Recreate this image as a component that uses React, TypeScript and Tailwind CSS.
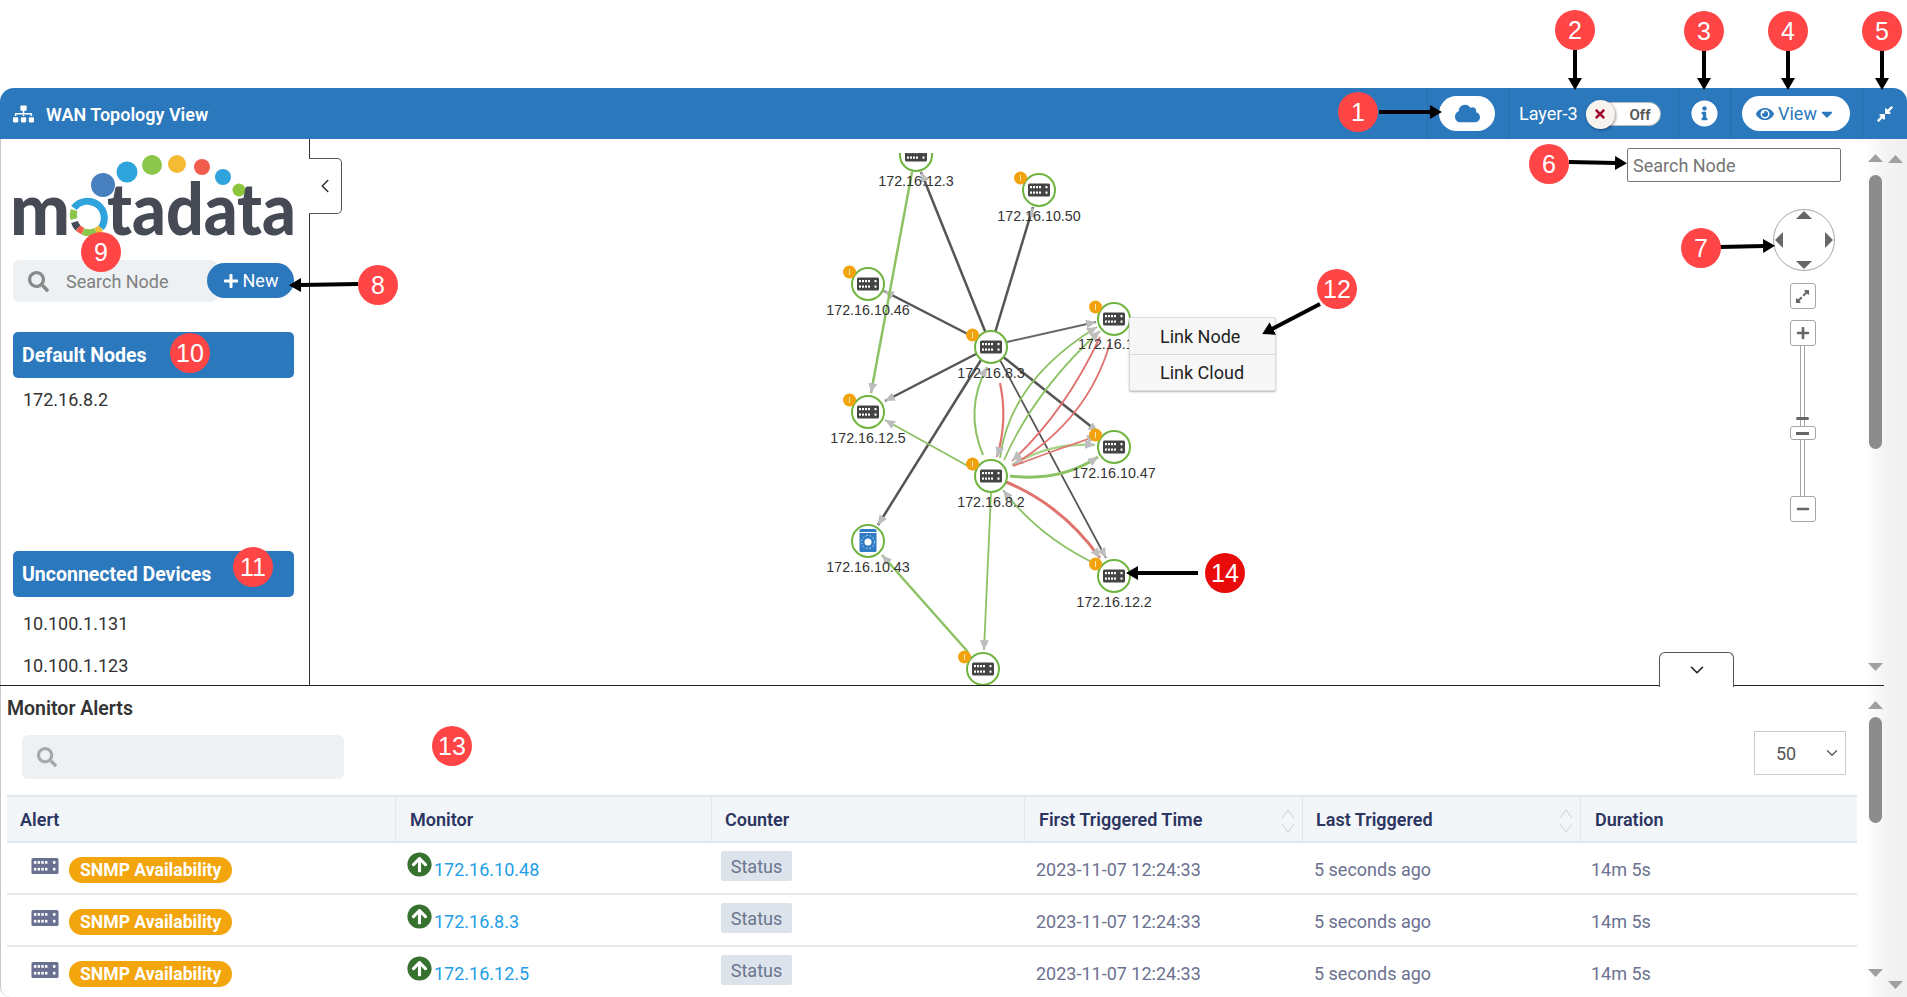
import { ChevronDown, ChevronLeft } from 'lucide-react';
import {
  FaArrowCircleUp,
  FaCaretDown,
  FaCloud,
  FaCompressAlt,
  FaExpandAlt,
  FaEye,
  FaInfoCircle,
  FaMinus,
  FaPlus,
  FaSearch,
  FaSitemap,
  FaTimes,
} from 'react-icons/fa';

const edges = [
  { d: 'M991 346 L921 172', color: '#555', w: 2.5 },
  { d: 'M991 346 L1033 207', color: '#555', w: 2.5 },
  { d: 'M991 346 L884 291', color: '#555', w: 2.5 },
  { d: 'M1007 342 L1096 322', color: '#666', w: 1.8 },
  { d: 'M976 354 L885 401', color: '#555', w: 2.5 },
  { d: 'M981 360 L878 525', color: '#555', w: 2.5 },
  { d: 'M1002 356 L1098 432', color: '#555', w: 2.5 },
  { d: 'M1000 360 L1106 558', color: '#555', w: 1.8 },
  { d: 'M912 172 L871 393', color: '#8cc263', w: 2.5 },
  { d: 'M975 470 L885 420', color: '#8cc263', w: 1.8 },
  { d: 'M991 493 L984 650', color: '#8cc263', w: 1.8 },
  { d: 'M968 652 L882 555', color: '#8cc263', w: 2.5 },
  { d: 'M1098 565 Q1040 538 1003 490', color: '#8cc263', w: 1.8 },
  { d: 'M1000 458 Q1010 380 1097 327', color: '#8cc263', w: 1.8 },
  { d: 'M1004 460 Q1035 390 1100 331', color: '#8cc263', w: 1.8 },
  { d: 'M983 455 Q964 410 987 367', color: '#8cc263', w: 2 },
  { d: 'M1010 476 Q1060 482 1098 457', color: '#8cc263', w: 3 },
  { d: 'M1012 465 Q1050 442 1095 445', color: '#a9d48a', w: 2.5 },
  { d: 'M1000 383 Q1008 420 997 457', color: '#e0736e', w: 2.2 },
  { d: 'M1100 337 Q1065 412 1012 461', color: '#e0736e', w: 1.8 },
  { d: 'M1110 343 Q1088 420 1013 465', color: '#e0736e', w: 1.8 },
  { d: 'M1013 466 Q1055 450 1097 436', color: '#e0736e', w: 1.8 },
  { d: 'M1006 482 Q1062 505 1100 558', color: '#e0736e', w: 3 },
];

const nodes = [
  { x: 916, y: 155, ly: 186, label: '172.16.12.3', badge: false },
  { x: 1039, y: 190, ly: 221, label: '172.16.10.50', badge: true },
  { x: 868, y: 284, ly: 315, label: '172.16.10.46', badge: true },
  { x: 991, y: 347, ly: 378, label: '172.16.8.3', badge: true },
  { x: 1114, y: 319, ly: 350, label: '', badge: true },
  { x: 868, y: 412, ly: 443, label: '172.16.12.5', badge: true },
  { x: 991, y: 476, ly: 507, label: '172.16.8.2', badge: true },
  { x: 1114, y: 447, ly: 478, label: '172.16.10.47', badge: true },
  { x: 1114, y: 576, ly: 607, label: '172.16.12.2', badge: true },
  { x: 983, y: 669, ly: 700, label: '', badge: true },
];

const rows = ['172.16.10.48', '172.16.8.3', '172.16.12.5'];

const callouts = [
  { n: '1', x: 1358, y: 112 },
  { n: '2', x: 1575, y: 30 },
  { n: '3', x: 1704, y: 31 },
  { n: '4', x: 1788, y: 31 },
  { n: '5', x: 1882, y: 31 },
  { n: '6', x: 1549, y: 164 },
  { n: '7', x: 1701, y: 248 },
  { n: '8', x: 378, y: 285 },
  { n: '9', x: 101, y: 252 },
  { n: '10', x: 190, y: 353 },
  { n: '11', x: 253, y: 567 },
  { n: '12', x: 1337, y: 289 },
  { n: '13', x: 452, y: 746 },
];

const pointers = [
  'M1379 112 L1431 112',
  'M1575 50 L1575 79',
  'M1704 50 L1704 79',
  'M1788 50 L1788 79',
  'M1882 50 L1882 79',
  'M1569 162 L1616 163',
  'M1720 247 L1764 246',
  'M358 284 L300 285',
  'M1320 304 L1272 329',
  'M1198 573 L1137 573',
];

function SwitchShape({ fill = '#444' }: { fill?: string }) {
  return (
    <g>
      <rect width="22" height="13" rx="1.5" fill={fill} />
      {[0, 1].map((r) =>
        [2, 5, 8, 11, 17.5].map((c) => (
          <rect key={`${r}-${c}`} x={c} y={r === 0 ? 2.5 : 8} width="2" height="2.2" fill="#fff" />
        )),
      )}
    </g>
  );
}

function Node({ x, y, ly, label, badge }: (typeof nodes)[number]) {
  return (
    <g>
      <circle cx={x} cy={y} r="16" fill="#fff" stroke="#6eb43f" strokeWidth="2" />
      <g transform={`translate(${x - 11} ${y - 6.5})`}>
        <SwitchShape />
      </g>
      {badge && (
        <g>
          <circle cx={x - 18.5} cy={y - 12} r="6.5" fill="#f2a20c" />
          <rect x={x - 19} y={y - 15} width="1" height="6" fill="#fbe3b0" />
        </g>
      )}
      {label && (
        <text x={x} y={ly} textAnchor="middle" fontSize="14.3" fill="#333" fontFamily="'Liberation Sans', sans-serif">
          {label}
        </text>
      )}
    </g>
  );
}

function TopologyGraph() {
  return (
    <svg className="absolute inset-0 w-[1244px] h-[546px]" viewBox="310 139 1244 546">
      <defs>
        <marker id="tip" markerUnits="userSpaceOnUse" markerWidth="12" markerHeight="10" refX="10" refY="4.5" orient="auto">
          <path d="M0 0 L10 4.5 L0 9 Z" fill="#bdbdbd" />
        </marker>
        <clipPath id="graphClip">
          <rect x="310" y="153" width="1244" height="532" />
        </clipPath>
      </defs>
      <g clipPath="url(#graphClip)">
        {edges.map((e) => (
          <path key={e.d} d={e.d} fill="none" stroke={e.color} strokeWidth={e.w} markerEnd="url(#tip)" />
        ))}
        {nodes.map((n) => (
          <Node key={`${n.x}-${n.y}`} {...n} />
        ))}
        <circle cx="868" cy="541" r="16" fill="#fff" stroke="#6eb43f" strokeWidth="2" />
        <rect x="859.5" y="529" width="17" height="23" rx="1.5" fill="#2f7cc4" />
        <rect x="859.5" y="532" width="17" height="1" fill="#fff" />
        <circle cx="868" cy="542" r="3.5" fill="#fff" />
        <circle cx="868" cy="542" r="6.5" fill="none" stroke="#cfe2f5" strokeWidth="1" strokeDasharray="1.5 2" />
        <text x="868" y="572" textAnchor="middle" fontSize="14.3" fill="#333" fontFamily="'Liberation Sans', sans-serif">
          172.16.10.43
        </text>
        <text x="1078" y="349" fontSize="14.3" fill="#333" fontFamily="'Liberation Sans', sans-serif">
          172.16.1
        </text>
      </g>
    </svg>
  );
}

function Logo() {
  const dots = [
    [102, 185, 12, '#477fbf'],
    [126, 172, 10.5, '#2fa3dc'],
    [151, 165, 10, '#8cc64b'],
    [176, 164, 9, '#f4bc34'],
    [201, 167, 8, '#f25c4d'],
    [222, 177, 8, '#2fa3dc'],
    [238, 190, 6.5, '#8cc63f'],
  ] as const;
  return (
    <svg className="absolute left-0 top-0 w-[309px] h-[110px]" viewBox="0 139 309 110">
      {dots.map(([cx, cy, r, fill]) => (
        <circle key={fill + cx} cx={cx} cy={cy} r={r} fill={fill} />
      ))}
      <text x="9" y="235" fontSize="72" fontWeight="900" fill="#454a54" fontFamily="Lato, sans-serif" textLength="60" lengthAdjust="spacingAndGlyphs">
        m
      </text>
      <text x="106" y="235" fontSize="72" fontWeight="900" fill="#454a54" fontFamily="Lato, sans-serif" textLength="189" lengthAdjust="spacingAndGlyphs">
        tadata
      </text>
      <g fill="none" strokeWidth="7">
        <path d="M73 208 A15 15 0 1 1 100 228" stroke="#2fa3dc" />
        <path d="M73 210 A15 15 0 0 0 73 219" stroke="#8cc64b" />
        <path d="M73.5 222 A15 15 0 0 0 77 228" stroke="#454a54" />
        <path d="M77 228 A15 15 0 0 0 82 231" stroke="#f25c4d" />
        <path d="M82 231.5 A15 15 0 0 0 95 231" stroke="#8cc64b" />
        <path d="M95 231 A15 15 0 0 0 100 228" stroke="#f4bc34" />
      </g>
    </svg>
  );
}

function Triangle({ dir }: { dir: 'up' | 'down' }) {
  return (
    <svg className="w-[15px] h-[8px] block" viewBox="0 0 15 8">
      <path d={dir === 'up' ? 'M0 8 L7.5 0 L15 8 Z' : 'M0 0 L15 0 L7.5 8 Z'} fill="#a0a0a0" />
    </svg>
  );
}

function PaneScrollbar({ thumb, down }: { thumb: string; down: string }) {
  return (
    <div className="w-[20px] shrink-0 pl-[4px] bg-linear-to-r from-white to-[#f4f4f4]">
      <div className="pt-[15px]">
        <Triangle dir="up" />
      </div>
      <div className={`ml-[1px] w-[13px] rounded-[7px] bg-[#8c8c8c] ${thumb}`} />
      <div className={down}>
        <Triangle dir="down" />
      </div>
    </div>
  );
}

function ZoomControls() {
  return (
    <div className="absolute left-[1462px] top-[70px] w-[64px] flex flex-col items-center">
      <div className="relative size-[62px] rounded-full border border-[#a5a5a5] bg-white">
        <div className="absolute left-[22px] top-[1px] border-x-[8px] border-b-[8px] border-x-transparent border-b-[#666]" />
        <div className="absolute left-[22px] bottom-[1px] border-x-[8px] border-t-[8px] border-x-transparent border-t-[#666]" />
        <div className="absolute left-[1px] top-[22px] border-y-[8px] border-r-[8px] border-y-transparent border-r-[#666]" />
        <div className="absolute right-[1px] top-[22px] border-y-[8px] border-l-[8px] border-y-transparent border-l-[#666]" />
      </div>
      <div className="-ml-[3px] flex flex-col items-center">
        <div className="mt-[12px] size-[26px] flex items-center justify-center rounded-[3px] border border-[#a5a5a5] text-[#666]">
          <FaExpandAlt className="size-[15px]" />
        </div>
        <div className="mt-[11px] size-[26px] flex items-center justify-center rounded-[3px] border border-[#a5a5a5] text-[#666]">
          <FaPlus className="size-[14px]" />
        </div>
        <div className="relative w-[5px] h-[80px] border-x border-[#a5a5a5]">
          <div className="absolute -left-[5px] bottom-[6px] w-[13px] h-[3px] rounded-full bg-[#666]" />
        </div>
        <div className="w-[26px] h-[14px] flex items-center justify-center rounded-[3px] border border-[#a5a5a5] text-[#666]">
          <div className="w-[13px] h-[3px] bg-[#666]" />
        </div>
        <div className="w-[5px] h-[56px] border-x border-[#a5a5a5]" />
        <div className="size-[26px] flex items-center justify-center rounded-[3px] border border-[#a5a5a5] text-[#666]">
          <FaMinus className="size-[14px]" />
        </div>
      </div>
    </div>
  );
}

function Sidebar() {
  return (
    <aside className="relative w-[310px] shrink-0 border-l border-r border-l-[#c8c8c8] border-r-[#333] px-[12px] pt-[121px] overflow-hidden text-[18px]">
      <Logo />
      <div className="relative h-[42px] w-[204px] flex items-center rounded-[6px] bg-[#edf1f3] text-[#808080]">
        <FaSearch className="ml-[15px] size-[21px] text-[#8a8a8a]" />
        <span className="ml-[17px]">Search Node</span>
        <button className="absolute left-[194px] top-[3px] w-[87px] h-[35px] flex items-center justify-center gap-[4px] rounded-full bg-[#2b78bd] text-white">
          <FaPlus className="size-[16px]" />
          New
        </button>
      </div>
      <div className="mt-[30px] w-[281px] h-[46px] flex items-center pl-[9px] pt-[2px] rounded-[5px] bg-[#2b78bd] font-bold text-[19.5px] text-white">
        Default Nodes
      </div>
      <div className="mt-[10px] pl-[10px] text-[#333] leading-[24px]">172.16.8.2</div>
      <div className="mt-[139px] w-[281px] h-[46px] flex items-center pl-[9px] pt-[2px] rounded-[5px] bg-[#2b78bd] font-bold text-[19.5px] text-white">
        Unconnected Devices
      </div>
      <div className="mt-[15px] pl-[10px] text-[#333] leading-[24px]">10.100.1.131</div>
      <div className="mt-[18px] pl-[10px] text-[#333] leading-[24px]">10.100.1.123</div>
    </aside>
  );
}

function Canvas() {
  return (
    <div className="relative flex-1 min-w-0">
      <TopologyGraph />
      <div className="absolute left-0 top-[19px] w-[33px] h-[56px] flex items-center justify-center -ml-px rounded-r-[5px] border border-l-0 border-[#555] bg-white text-[#333]">
        <ChevronLeft className="size-[22px]" strokeWidth={1.75} />
      </div>
      <div className="absolute left-[1317px] top-[9px] w-[214px] h-[34px] flex items-center pl-[5px] rounded-[2px] border border-[#777] bg-white text-[18px] text-[#757575]">
        Search Node
      </div>
      <ZoomControls />
      <div className="absolute left-[819px] top-[178px] w-[147px] h-[74px] rounded-[2px] border border-[#ddd] bg-[#f7f7f7] shadow-[0_1px_2px_rgba(0,0,0,0.3)] text-[18px] text-[#222]">
        <div className="h-[37px] flex items-center pl-[30px] border-b border-[#d8d8d8]">Link Node</div>
        <div className="h-[35px] flex items-center pl-[30px]">Link Cloud</div>
      </div>
      <div className="absolute left-[1349px] bottom-[-2px] w-[75px] h-[35px] flex items-center justify-center rounded-t-[6px] border border-b-0 border-[#555] bg-white text-[#222]">
        <ChevronDown className="size-[22px]" strokeWidth={1.75} />
      </div>
    </div>
  );
}

function SortIcon() {
  return (
    <svg className="absolute right-[6px] top-[11px] w-[16px] h-[26px]" viewBox="0 0 16 26" fill="none" stroke="#d4d8dc" strokeWidth="1.2">
      <path d="M2 10 L8 2 L14 10" />
      <path d="M2 16 L8 24 L14 16" />
    </svg>
  );
}

function AlertsTable() {
  const cols = 'grid grid-cols-[388px_316px_313px_278px_278px_278px]';
  const head = 'relative h-full flex items-center border-l border-[#e1e6ea] first:border-l-0';
  return (
    <div className="mt-[16px] w-[1850px] text-[18px]">
      <div className={`${cols} h-[48px] border-y-2 border-[#e1e6ea] bg-[#f3f6f9] font-semibold text-[#2b3560]`}>
        <div className={`${head} pl-[13px]`}>Alert</div>
        <div className={`${head} pl-[14px]`}>Monitor</div>
        <div className={`${head} pl-[13px]`}>Counter</div>
        <div className={`${head} pl-[14px]`}>
          First Triggered Time
          <SortIcon />
        </div>
        <div className={`${head} pl-[13px]`}>
          Last Triggered
          <SortIcon />
        </div>
        <div className={`${head} pl-[14px]`}>Duration</div>
      </div>
      {rows.map((ip) => (
        <div key={ip} className={`${cols} h-[52px] border-b-2 border-[#e4e8ec] text-[#6b7190]`}>
          <div className="flex items-center pl-[23px]">
            <svg className="w-[30px] h-[16px] -mt-[4px]" viewBox="0 0 22 13">
              <SwitchShape fill="#6a7090" />
            </svg>
            <span className="ml-[9px] mt-[4px] h-[26px] flex items-center px-[11px] rounded-full bg-[#f2a50c] font-bold text-[17.6px] text-white">
              SNMP Availability
            </span>
          </div>
          <div className="flex items-center pl-[12px]">
            <FaArrowCircleUp className="size-[25px] -mt-[8px] text-[#37712f]" />
            <a className="ml-[2px] mt-[2px] text-[#1e9ee8]">{ip}</a>
          </div>
          <div className="pl-[10px] pt-[8px]">
            <span className="w-[71px] h-[30px] flex items-center justify-center rounded-[2px] bg-[#dde3ea] text-[#6a7590]">
              Status
            </span>
          </div>
          <div className="flex items-center pl-[12px]">
            <span className="mt-[2px]">2023-11-07 12:24:33</span>
          </div>
          <div className="flex items-center pl-[12px]">
            <span className="mt-[2px]">5 seconds ago</span>
          </div>
          <div className="flex items-center pl-[11px]">
            <span className="mt-[2px]">14m 5s</span>
          </div>
        </div>
      ))}
    </div>
  );
}

function Annotations() {
  return (
    <svg className="absolute inset-0 w-[1907px] h-[997px] pointer-events-none" viewBox="0 0 1907 997">
      <defs>
        <marker id="black" markerUnits="userSpaceOnUse" markerWidth="14" markerHeight="16" refX="1" refY="7" orient="auto">
          <path d="M0 0 L12 7 L0 14 Z" fill="#000" />
        </marker>
      </defs>
      {pointers.map((d) => (
        <path key={d} d={d} stroke="#000" strokeWidth="4" fill="none" markerEnd="url(#black)" />
      ))}
      {callouts.map((c) => (
        <g key={c.n}>
          <circle cx={c.x} cy={c.y} r="20" fill="#ff4545" />
          <text x={c.x} y={c.y + 9} textAnchor="middle" fontSize="25" fill="#fff" fontFamily="'Liberation Sans', sans-serif">
            {c.n}
          </text>
        </g>
      ))}
      <circle cx="1225" cy="573" r="20" fill="#e90a0a" />
      <text x="1225" y="582" textAnchor="middle" fontSize="25" fill="#fff" fontFamily="'Liberation Sans', sans-serif">
        14
      </text>
    </svg>
  );
}

export default function App() {
  return (
    <div className="relative w-[1907px] h-[997px] overflow-hidden bg-white pt-[88px] font-['Roboto',sans-serif]">
      <header className="h-[51px] flex items-center rounded-t-[14px] bg-[#2b78bd] text-white text-[18px]">
        <FaSitemap className="ml-[13px] w-[21px] h-[18px]" />
        <span className="ml-[12px] mt-[1px] font-semibold">WAN Topology View</span>
        <div className="ml-auto h-full flex items-stretch">
          <div className="w-[81px] flex items-center pl-[11px] border-l border-[#276dab]">
            <div className="w-[56px] h-[35px] flex items-center justify-center rounded-full bg-white text-[#2b78bd]">
              <FaCloud className="size-[25px]" />
            </div>
          </div>
          <div className="w-[170px] flex items-center pl-[10px] border-l border-[#276dab]">
            Layer-3
            <div className="relative ml-[8px] w-[75px] h-[24px] rounded-full border border-[#bbb] bg-white text-[#555] text-[15px] font-semibold">
              <span className="absolute right-[9px] top-[1px]">Off</span>
              <div className="absolute -left-px -top-[3px] size-[29px] flex items-center justify-center rounded-full bg-[#f7f3ee] shadow-[1px_1px_3px_rgba(0,0,0,0.4)] text-[#a5022b]">
                <FaTimes className="size-[14px]" />
              </div>
            </div>
          </div>
          <div className="w-[52px] flex items-center pl-[12px] border-l border-[#276dab]">
            <FaInfoCircle className="size-[27px]" />
          </div>
          <div className="w-[132px] flex items-center pl-[11px] border-l border-[#276dab]">
            <div className="w-[108px] h-[35px] flex items-center justify-center rounded-full bg-white text-[#2b78bd]">
              <FaEye className="size-[18px]" />
              <span className="ml-[4px]">View</span>
              <FaCaretDown className="ml-[1px] size-[18px]" />
            </div>
          </div>
          <div className="w-[45px] flex items-center justify-center border-l border-[#276dab]">
            <FaCompressAlt className="size-[18px]" />
          </div>
        </div>
      </header>

      <div className="flex h-[858px]">
        <div className="w-[1884px] flex flex-col">
          <div className="flex h-[547px] border-b border-[#222]">
            <div className="w-[1864px] flex">
              <Sidebar />
              <Canvas />
            </div>
            <PaneScrollbar thumb="mt-[13px] h-[274px]" down="mt-[214px]" />
          </div>
          <div className="flex-1 flex border-l border-[#c8c8c8] rounded-bl-[10px] min-h-0">
            <div className="w-[1863px] pl-[6px] pt-[11px] overflow-hidden">
              <h2 className="text-[19.5px] leading-[24px] font-semibold text-[#333]">Monitor Alerts</h2>
              <div className="flex items-start pt-[10px]">
                <div className="ml-[15px] mt-[4px] w-[322px] h-[44px] flex items-center pl-[15px] rounded-[6px] bg-[#edf1f3]">
                  <FaSearch className="size-[20px] text-[#a5a9ac]" />
                </div>
                <div className="ml-auto mr-[18px] w-[92px] h-[44px] flex items-center justify-between pl-[21px] pr-[4px] border border-[#ccc] text-[18px] text-[#555]">
                  50
                  <ChevronDown className="size-[18px]" strokeWidth={1.75} />
                </div>
              </div>
              <AlertsTable />
            </div>
            <PaneScrollbar thumb="mt-[8px] h-[106px]" down="mt-[146px]" />
          </div>
        </div>
        <div className="w-[23px] pl-[4px] pt-[16px] pb-[8px] flex flex-col justify-between bg-linear-to-r from-[#f4f4f4] to-[#f0f0f0]">
          <Triangle dir="up" />
          <Triangle dir="down" />
        </div>
      </div>

      <Annotations />
    </div>
  );
}
